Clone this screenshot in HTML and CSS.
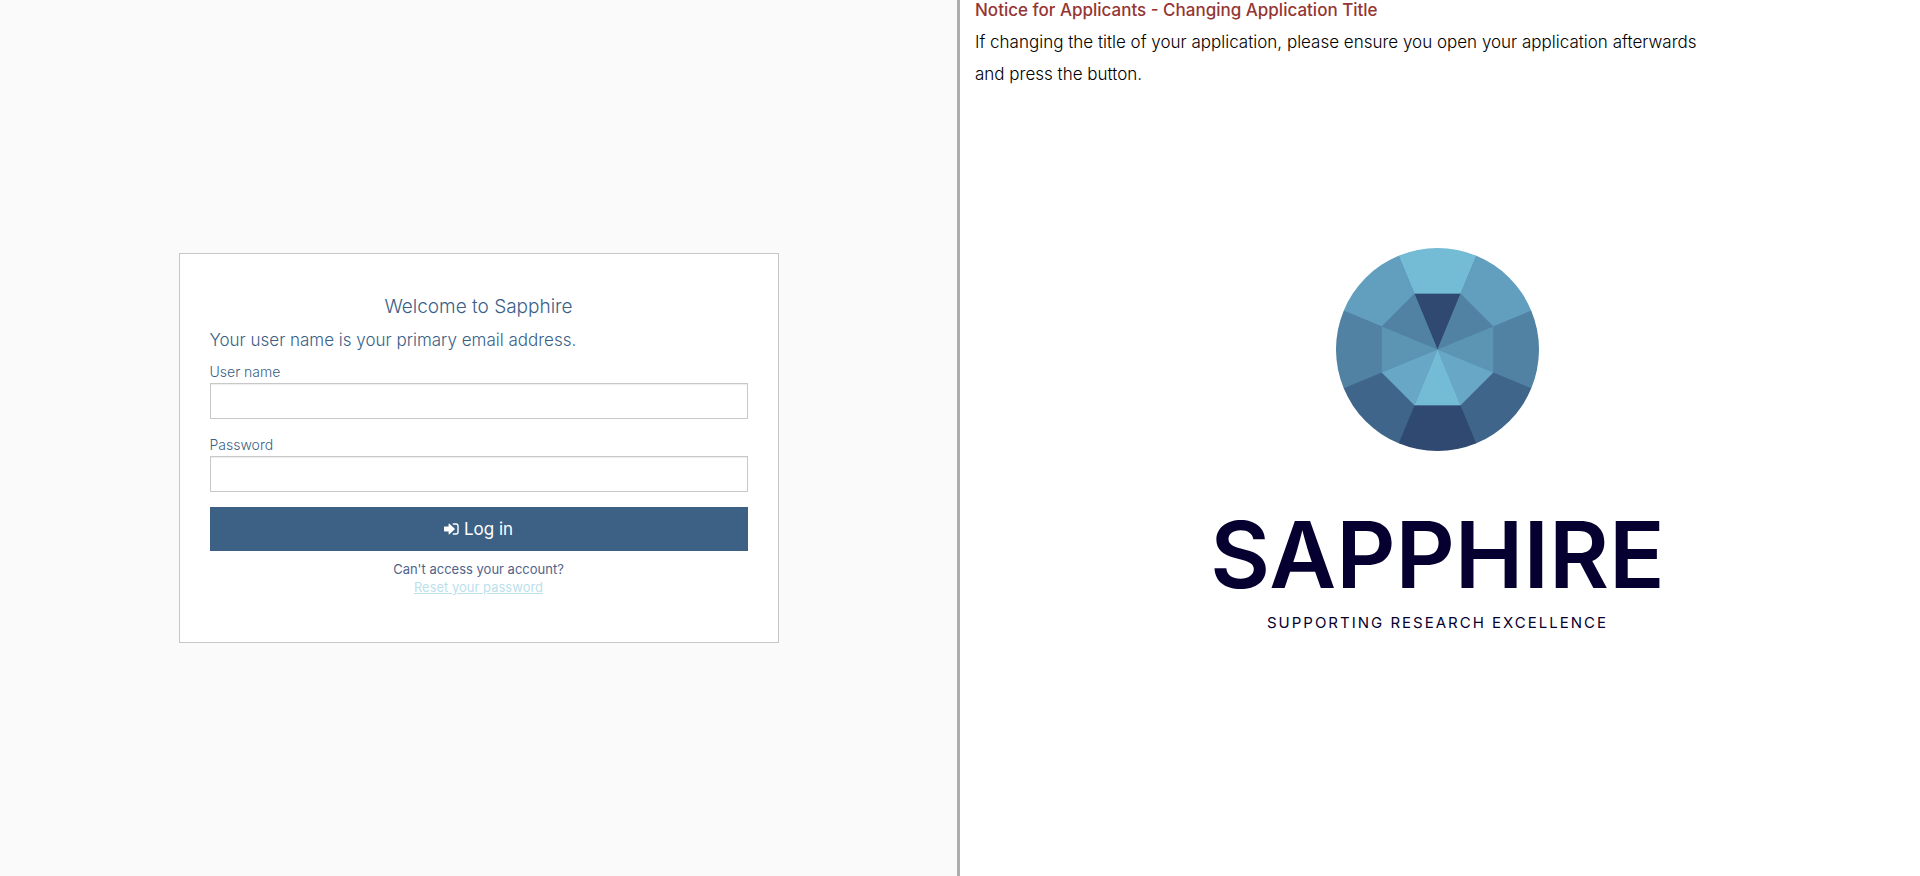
FILE: index.html
```html
<!DOCTYPE html>
<html lang="en">
<head>
<meta charset="utf-8">
<meta name="viewport" content="width=device-width, initial-scale=1">
<title>Sapphire - Log in</title>
<link rel="stylesheet" href="styles.css">
</head>
<body>
<div class="page">
  <main class="login-pane">
    <form class="card">
      <h1 class="card-title">Welcome to Sapphire</h1>
      <p class="hint">Your user name is your primary email address.</p>
      <div class="field">
        <label class="label" for="username">User name</label>
        <input class="input" id="username" name="username" type="text">
      </div>
      <div class="field">
        <label class="label" for="password">Password</label>
        <input class="input" id="password" name="password" type="password">
      </div>
      <button class="login-button" type="submit">
        <svg class="login-icon" viewBox="0 0 15 12" aria-hidden="true">
          <path fill="#fff" d="M0 4.3Q0 3.6.7 3.6H4.6V1.2Q4.6.2 5.4.8L10.6 5.5Q11 6 10.6 6.5L5.4 11.2Q4.6 11.8 4.6 10.8V8.4H.7Q0 8.4 0 7.7Z"/>
          <path fill="none" stroke="#fff" stroke-width="1.4" stroke-linecap="round" d="M9.3 1H12Q14 1 14 3V9Q14 11 12 11H9.3"/>
        </svg>
        <span>Log in</span>
      </button>
      <div class="help">
        <span>Can't access your account?</span>
        <a class="reset-link" href="#reset">Reset your password</a>
      </div>
    </form>
  </main>
  <aside class="info-pane">
    <section class="notice">
      <h2 class="notice-title">Notice for Applicants - Changing Application Title</h2>
      <p class="notice-text">If changing the title of your application, please ensure you open your application afterwards and press the button.</p>
    </section>
    <div class="brand">
      <svg class="gem" viewBox="-304 -304 608 608" aria-hidden="true">
        <defs><clipPath id="round"><circle r="304"/></clipPath></defs>
        <circle r="302" fill="#5182a3"/>
        <g clip-path="url(#round)">
          <path fill="#74bbd6" d="M-69 -167L-128 -309H128L69 -167Z"/>
          <path fill="#629fbe" d="M69 -167L128 -309H310V-128L167 -69Z"/>
          <path fill="#629fbe" d="M-69 -167L-128 -309H-310V-128L-167 -69Z"/>
          <path fill="#5182a3" d="M167 -69L310 -128V128L167 69Z"/>
          <path fill="#5182a3" d="M-167 -69L-310 -128V128L-167 69Z"/>
          <path fill="#3f668a" d="M167 69L310 128V309H128L69 167Z"/>
          <path fill="#3f668a" d="M-167 69L-310 128V309H-128L-69 167Z"/>
          <path fill="#2f4970" d="M-69 167L-128 309H128L69 167Z"/>
        </g>
        <path fill="#2f4970" d="M0 0L-69 -167H69Z"/>
        <path fill="#5182a3" d="M0 0L69 -167L167 -69Z"/>
        <path fill="#5182a3" d="M0 0L-69 -167L-167 -69Z"/>
        <path fill="#5c95b4" d="M0 0L167 -69V69Z"/>
        <path fill="#5c95b4" d="M0 0L-167 -69V69Z"/>
        <path fill="#68a7c5" d="M0 0L167 69L69 167Z"/>
        <path fill="#68a7c5" d="M0 0L-167 69L-69 167Z"/>
        <path fill="#74bbd6" d="M0 0L69 167H-69Z"/>
      </svg>
      <div class="wordmark">SAPPHIRE</div>
      <div class="tagline">SUPPORTING RESEARCH EXCELLENCE</div>
    </div>
  </aside>
</div>
</body>
</html>
```
FILE: styles.css
```css
* {
  box-sizing: border-box;
}

body {
  margin: 0;
  background: #fff;
  color: #000;
  font-family: Inter, "Liberation Sans", sans-serif;
  font-size: 17px;
  font-weight: 300;
}

h1, h2, p {
  margin: 0;
}

.page {
  display: grid;
  grid-template-columns: 1fr 1fr;
  min-height: 100vh;
}

.login-pane {
  display: flex;
  align-items: center;
  justify-content: center;
  padding: 20px 20px 0;
  background: #fafafa;
  border-right: 3px solid #adadad;
}

.card {
  display: flex;
  flex-direction: column;
  width: 100%;
  max-width: 600px;
  padding: 36px 30px 46px;
  background: #fff;
  border: 1px solid #c6c6c6;
  color: #3b5f87;
}

.card-title {
  font-size: 19px;
  font-weight: 300;
  line-height: 34px;
  text-align: center;
}

.hint {
  margin-bottom: 5px;
  line-height: 32px;
}

.field {
  display: flex;
  flex-direction: column;
  margin-bottom: 15px;
}

.label {
  font-size: 14px;
  line-height: 22px;
}

.input {
  width: 100%;
  height: 36px;
  padding: 6px 12px;
  background: #fff;
  border: 1px solid #c8c8c8;
  border-radius: 0;
  box-shadow: inset 0 1px 1px rgba(0, 0, 0, 0.07);
  font: inherit;
}

.login-button {
  display: flex;
  align-items: center;
  justify-content: center;
  gap: 5px;
  height: 44px;
  border: 0;
  background: #3c6184;
  color: #fff;
  font: inherit;
  font-weight: 400;
}

.login-icon {
  width: 15px;
  height: 12px;
}

.help {
  display: flex;
  flex-direction: column;
  align-items: center;
  padding-top: 9px;
  color: #50648a;
  font-size: 13px;
  font-weight: 400;
  line-height: 18px;
}

.reset-link {
  color: #bcdfec;
}

.info-pane {
  padding: 0 20px 0 15px;
}

.notice {
  max-width: 750px;
}

.notice-title {
  color: #943634;
  font-size: 17px;
  font-weight: 500;
  line-height: 20px;
}

.notice-text {
  padding-top: 6px;
  line-height: 32px;
}

.brand {
  display: flex;
  flex-direction: column;
  align-items: center;
  padding-top: 158px;
  color: #050030;
}

.gem {
  width: 203px;
  height: 203px;
}

.wordmark {
  padding-top: 54px;
  font-size: 92px;
  font-weight: 600;
  line-height: 100px;
}

.tagline {
  padding-top: 8px;
  font-size: 15px;
  font-weight: 400;
  letter-spacing: 2px;
  line-height: 20px;
}
```
